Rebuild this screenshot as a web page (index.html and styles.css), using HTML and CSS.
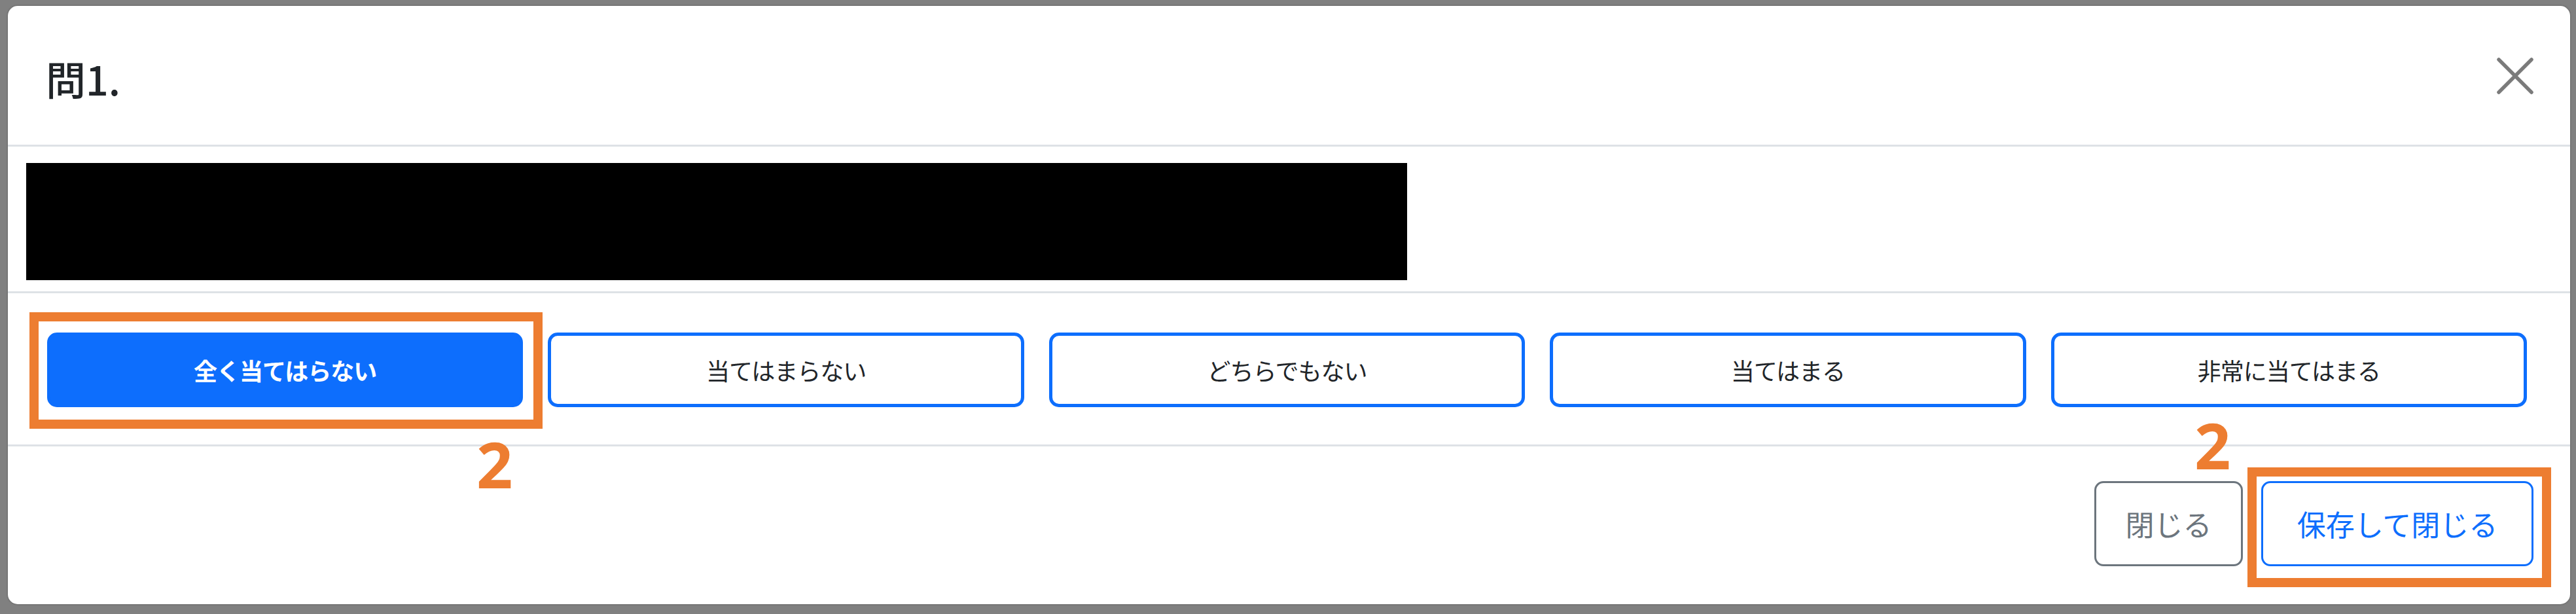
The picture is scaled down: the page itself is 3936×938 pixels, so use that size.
FILE: index.html
```html
<!DOCTYPE html>
<html lang="ja">
<head>
<meta charset="utf-8">
<title>問1.</title>
<link rel="stylesheet" href="styles.css">
</head>
<body>
<div class="modal">
  <div class="modal-header">
    <h5 class="modal-title">問1.</h5>
    <button class="btn-close" aria-label="Close">
      <svg viewBox="0 0 56 56" width="56" height="56"><path d="M3 3 L53 53 M53 3 L3 53" stroke="#7b7b7b" stroke-width="5.5" stroke-linecap="round" fill="none"/></svg>
    </button>
  </div>
  <div class="modal-body">
    <div class="redacted"></div>
  </div>
  <div class="options">
    <button class="opt opt-active">全く当てはらない</button>
    <button class="opt">当てはまらない</button>
    <button class="opt">どちらでもない</button>
    <button class="opt">当てはまる</button>
    <button class="opt">非常に当てはまる</button>
  </div>
  <div class="modal-footer">
    <button class="fbtn fbtn-secondary">閉じる</button>
    <button class="fbtn fbtn-primary">保存して閉じる</button>
  </div>
  <div class="mark mark-1"></div>
  <div class="num num-1">2</div>
  <div class="mark mark-2"></div>
  <div class="num num-2">2</div>
</div>
</body>
</html>
```
FILE: styles.css
```css
html, body {
  margin: 0;
  padding: 0;
}
body {
  background: #808080;
  width: 3936px;
  height: 938px;
  box-sizing: border-box;
  padding: 9px 9px 15px 12px;
  font-family: "Noto Sans CJK JP", "Noto Sans", sans-serif;
  color: #212529;
}
.modal {
  position: relative;
  background: #fff;
  border-radius: 15px;
  height: 914px;
  box-shadow: 0 0 3px rgba(0, 0, 0, 0.35);
  display: flex;
  flex-direction: column;
}
.modal-header {
  height: 212px;
  border-bottom: 3px solid #dee2e6;
  display: flex;
  align-items: center;
  justify-content: space-between;
  padding: 0 56px 0 58px;
}
.modal-title {
  margin: 0;
  font-size: 61px;
  font-weight: 500;
  line-height: 1;
  padding-top: 8px;
}
.btn-close {
  border: 0;
  background: transparent;
  padding: 0;
  width: 56px;
  height: 56px;
  display: flex;
  margin-top: 1px;
}
.modal-body {
  padding: 25px 0 17px 28px;
  border-bottom: 3px solid #dee2e6;
}
.redacted {
  width: 2110px;
  height: 179px;
  background: #000;
}
.options {
  display: grid;
  grid-template-columns: repeat(5, 1fr);
  column-gap: 38px;
  padding: 60px 66px 57px 60px;
  border-bottom: 3px solid #dee2e6;
}
.opt {
  height: 114px;
  border: 5px solid #0d6efd;
  border-radius: 15px;
  background: #fff;
  color: #212529;
  font-family: "Noto Sans CJK JP", "Noto Sans", sans-serif;
  font-size: 36px;
  line-height: 1;
  padding: 0;
  letter-spacing: -1px;
}
.opt-active {
  background: #0d6efd;
  color: #fff;
  font-weight: 700;
}
.modal-footer {
  display: flex;
  justify-content: flex-end;
  align-items: flex-start;
  gap: 28px;
  padding: 53px 56px 0 0;
}
.fbtn {
  height: 130px;
  border-radius: 14px;
  background: #fff;
  font-family: "Noto Sans CJK JP", "Noto Sans", sans-serif;
  font-size: 44px;
  line-height: 1;
  padding: 0;
}
.fbtn-secondary {
  width: 227px;
  border: 3px solid #6c757d;
  color: #6c757d;
}
.fbtn-primary {
  width: 416px;
  border: 3px solid #0d6efd;
  color: #0d6efd;
}
.mark {
  position: absolute;
  border: 14px solid #ed7d31;
  box-sizing: border-box;
}
.mark-1 {
  left: 33px;
  top: 468px;
  width: 784px;
  height: 178px;
}
.mark-2 {
  left: 3422px;
  top: 705px;
  width: 464px;
  height: 183px;
}
.num {
  position: absolute;
  font-family: "Open Sans", sans-serif;
  font-weight: 700;
  font-size: 97px;
  line-height: 1;
  color: #ed7d31;
}
.num-1 {
  left: 716px;
  top: 651px;
}
.num-2 {
  left: 3341px;
  top: 622px;
}
```
